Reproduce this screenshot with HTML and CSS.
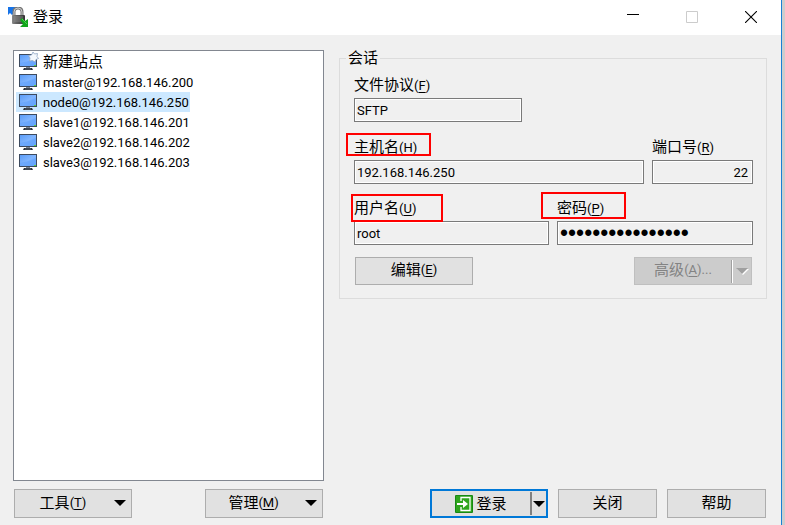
FILE: index.html
```html
<!DOCTYPE html>
<html lang="zh-CN">
<head>
<meta charset="utf-8">
<title>登录</title>
<link rel="stylesheet" href="styles.css">
</head>
<body>
<svg class="defs" aria-hidden="true">
  <defs>
    <linearGradient id="screen" x1="0" y1="0" x2="1" y2="1">
      <stop offset="0" stop-color="#5a9cf8"/><stop offset=".5" stop-color="#80b5ff"/><stop offset="1" stop-color="#6aa8ff"/>
    </linearGradient>
    <linearGradient id="metal" x1="0" y1="0" x2="1" y2="0">
      <stop offset="0" stop-color="#8a8a8a"/><stop offset=".3" stop-color="#666"/><stop offset="1" stop-color="#333"/>
    </linearGradient>
    <symbol id="monitor" viewBox="0 0 18 18">
      <path d="M0 1h18v13H0z" fill="#3d4a5e"/>
      <path d="M1 2h16v11H1z" fill="url(#screen)"/>
      <path d="M1 10Q9 9 17 5v8H1z" fill="#5c9dfb" opacity=".5"/>
      <path d="M15 12h2v1h-2z" fill="#5bd43c"/>
      <path d="M7 14h4v1H7z" fill="#7c8492"/>
      <path d="M5 15h8l1 2H4z" fill="#29313d"/>
      <path d="M6 16h6" stroke="#7c8492" stroke-width=".6"/>
    </symbol>
  </defs>
</svg>
<div class="window">
  <header class="titlebar">
    <svg class="app-icon" viewBox="0 0 20 20" aria-hidden="true">
      <path d="M0 0h8L5 3l2 2-3 3-2-2-2 2z" fill="#1673e8"/>
      <path d="M6 9V5q0-4 4-4t4 4v4" fill="none" stroke="#777" stroke-width="3"/>
      <path d="M6 9V5q0-4 4-4t4 4v4" fill="none" stroke="#ccc"/>
      <rect x="4" y="8" width="13" height="9" rx="1" fill="url(#metal)"/>
      <path d="M6 10h9M6 12h9M6 14h9" stroke="#aaa" stroke-width="1" opacity=".5"/>
      <path d="M12 13l2-2 3 3 3-2v8h-8l3-3z" fill="#12a51b"/>
      <path d="M14 12l5 5" stroke="#45d447"/>
    </svg>
    <h1 class="title">登录</h1>
    <div class="controls">
      <button class="control" type="button" aria-label="最小化"><svg viewBox="0 0 12 12"><path d="M0 3.500h12" stroke="#000"/></svg></button>
      <button class="control" type="button" aria-label="最大化" disabled><svg viewBox="0 0 12 12"><path d="M.5.5h11v11H.5z" fill="none" stroke="#ccc"/></svg></button>
      <button class="control" type="button" aria-label="关闭窗口"><svg viewBox="0 0 12 12"><path d="M0 0l12 12M12 0L0 12" stroke="#000" stroke-width="1.1"/></svg></button>
    </div>
  </header>
  <main class="content">
    <ul class="sites">
      <li class="site new"><svg class="site-icon" viewBox="0 0 18 18"><use href="#monitor"/><path d="M14 -1l1.500 2 3-.5-.5 3 1.500 2-2.500 1-1 2.500-2.500-1.500-3 .5 .5-3-1.500-2.500 3-.5z" fill="#f4f8fd" stroke="#8fa6c4" stroke-width=".8"/></svg><span class="site-name">新建站点</span></li>
      <li class="site"><svg class="site-icon"><use href="#monitor"/></svg><span class="site-name">master@192.168.146.200</span></li>
      <li class="site selected"><svg class="site-icon"><use href="#monitor"/></svg><span class="site-name">node0@192.168.146.250</span></li>
      <li class="site"><svg class="site-icon"><use href="#monitor"/></svg><span class="site-name">slave1@192.168.146.201</span></li>
      <li class="site"><svg class="site-icon"><use href="#monitor"/></svg><span class="site-name">slave2@192.168.146.202</span></li>
      <li class="site"><svg class="site-icon"><use href="#monitor"/></svg><span class="site-name">slave3@192.168.146.203</span></li>
    </ul>
    <form class="session-form">
      <fieldset class="session">
        <legend class="legend">会话</legend>
        <div class="row protocol-row">
          <div class="field">
            <label class="label" for="protocol">文件协议<span class="key">(<u>F</u>)</span></label>
            <input class="input" id="protocol" value="SFTP" readonly>
          </div>
        </div>
        <div class="row host-row">
          <div class="field">
            <label class="label mark mark-host" for="host">主机名<span class="key">(<u>H</u>)</span></label>
            <input class="input" id="host" value="192.168.146.250" readonly>
          </div>
          <div class="field">
            <label class="label" for="port">端口号<span class="key">(<u>R</u>)</span></label>
            <input class="input number" id="port" value="22" readonly>
          </div>
        </div>
        <div class="row user-row">
          <div class="field">
            <label class="label mark mark-user" for="user">用户名<span class="key">(<u>U</u>)</span></label>
            <input class="input" id="user" value="root" readonly>
          </div>
          <div class="field">
            <label class="label mark mark-password" for="password">密码<span class="key">(<u>P</u>)</span></label>
            <input class="input password" id="password" type="password" value="passwordpassword" readonly>
          </div>
        </div>
        <div class="actions">
          <button class="button wide" type="button"><span class="text">编辑<span class="key">(<u>E</u>)</span></span></button>
          <button class="button wide split" type="button" disabled><span class="text">高级<span class="key">(<u>A</u>)...</span></span><span class="divider"></span><svg class="arrow" viewBox="0 0 12 6"><path d="M1 1h12L7 7z" fill="#fff"/><path d="M0 0h12L6 6z" fill="#a0a0a0"/></svg></button>
        </div>
      </fieldset>
    </form>
  </main>
  <footer class="footer">
    <div class="footer-group tools">
      <button class="button wide menu" type="button"><span class="text">工具<span class="key">(<u>T</u>)</span></span><svg class="arrow" viewBox="0 0 12 6"><path d="M0 0h12L6 6z"/></svg></button>
      <button class="button wide menu" type="button"><span class="text">管理<span class="key">(<u>M</u>)</span></span><svg class="arrow" viewBox="0 0 12 6"><path d="M0 0h12L6 6z"/></svg></button>
    </div>
    <div class="footer-group">
      <button class="button wide split primary" type="button"><span class="text"><svg class="login-icon" viewBox="0 0 18 18"><rect width="18" height="18" rx="1" fill="#178915"/><rect x="1" y="1" width="16" height="16" fill="#2fa51d"/><path d="M6 6V2.500h9v13H6V12" fill="none" stroke="#fff" stroke-width="1.300"/><path d="M2 8h6V5l5 4-5 4v-3H2z" fill="#fff"/></svg>登录</span><span class="divider"></span><svg class="arrow" viewBox="0 0 12 6"><path d="M0 0h12L6 6z"/></svg></button>
      <button class="button" type="button"><span class="text">关闭</span></button>
      <button class="button" type="button"><span class="text">帮助</span></button>
    </div>
  </footer>
</div>
</body>
</html>
```
FILE: styles.css
```css
*,
*::after {
  box-sizing: border-box;
}

body {
  margin: 0;
  min-height: 100vh;
  display: flex;
  padding-right: 3px;
  background: #cdcdcd;
  color: #000;
  font: 15px/20px Roboto, "Noto Sans CJK SC", sans-serif;
}

button,
input {
  font: inherit;
  color: inherit;
  border-radius: 0;
  margin: 0;
}

.defs {
  position: absolute;
  width: 0;
  height: 0;
}

.window {
  flex: 1;
  display: flex;
  flex-direction: column;
  background: #f0f0f0;
  border-right: 1px solid #1a7fd4;
}

.titlebar {
  display: flex;
  align-items: center;
  height: 35px;
  padding: 0 1px 2px 8px;
  gap: 5px;
  background: #fff;
}

.app-icon {
  width: 20px;
  height: 20px;
}

.title {
  margin: 0;
  font-size: 15px;
  font-weight: 400;
}

.controls {
  display: flex;
  margin-left: auto;
}

.control {
  width: 59px;
  height: 32px;
  padding: 0;
  border: 0;
  background: none;
  display: flex;
  align-items: center;
  justify-content: center;
}

.control svg {
  width: 12px;
  height: 12px;
}

.content {
  flex: 1;
  display: grid;
  grid-template-columns: 311fr 428fr;
  gap: 15px;
  padding: 15px 14px 8px 13px;
}

.sites {
  margin: 0;
  padding: 1px 2px;
  list-style: none;
  background: #fff;
  border: 1px solid #828790;
}

.site {
  display: flex;
  align-items: center;
  gap: 3px;
  height: 20px;
  width: fit-content;
  padding-left: 3px;
  font-size: 13px;
}

.site-name {
  padding: 2px 1px 0 3px;
}

.new {
  font-size: 15px;
}

.new .site-name {
  padding-top: 0;
}

.selected {
  background: #cce8ff;
}

.site-icon {
  width: 18px;
  height: 18px;
  overflow: visible;
}

.session {
  margin: 0;
  padding: 7px 13px 13px 14px;
  border: 1px solid #dcdcdc;
  min-width: 0;
}

.legend {
  margin-left: -8px;
  padding: 0 2px;
  line-height: 16px;
}

.row {
  display: grid;
  gap: 8px;
  margin-bottom: 12px;
}

.protocol-row {
  grid-template-columns: 168fr 223fr;
  margin-bottom: 13px;
}

.host-row {
  grid-template-columns: 290fr 101fr;
}

.user-row {
  grid-template-columns: 195fr 196fr;
}

.field {
  min-width: 0;
}

.label {
  position: relative;
  display: block;
  width: fit-content;
  height: 25px;
  line-height: 24px;
}

.key {
  font-size: 13px;
}

u {
  text-underline-offset: 2px;
}

.mark::after {
  content: "";
  position: absolute;
  border: 2px solid #f00;
}

.mark-host::after {
  inset: -2px auto auto -8px;
  width: 85px;
  height: 23px;
}

.mark-user::after {
  inset: -2px auto auto -3px;
  width: 92px;
  height: 28px;
}

.mark-password::after {
  inset: -4px auto auto -16px;
  width: 85px;
  height: 27px;
}

.input {
  display: block;
  width: 100%;
  height: 24px;
  padding: 0 2px;
  border: 1px solid #7a7a7a;
  background: #f0f0f0;
  box-shadow: inset 0 0 0 1px #fff;
  font-size: 13px;
  outline: 0;
}

.number {
  text-align: right;
  padding-right: 4px;
}

.password {
  font-family: "Liberation Sans", sans-serif;
  font-size: 23px;
}

.actions {
  display: flex;
  justify-content: space-between;
  padding: 0 1px;
}

.button {
  display: flex;
  align-items: center;
  width: 99px;
  height: 29px;
  padding: 0;
  border: 1px solid #adadad;
  background: #e1e1e1;
}

.wide {
  width: 118px;
}

.actions .button {
  height: 28px;
}

.text {
  flex: 1;
  display: flex;
  align-items: center;
  justify-content: center;
  white-space: pre;
  padding-bottom: 2px;
}

.arrow {
  width: 12px;
  height: 6px;
  overflow: visible;
}

.menu .arrow {
  margin: 0 5px 2px 3px;
}

.split .arrow {
  margin: 0 3px;
}

.divider {
  width: 2px;
  height: 23px;
  background: #808080;
}

.button:disabled {
  background: #ccc;
  border-color: #bfbfbf;
  color: #838383;
}

.button:disabled .divider {
  background: linear-gradient(90deg, #a0a0a0 50%, #fff 50%);
}

.primary {
  border: 2px solid #0078d7;
}

.primary .arrow {
  margin: 0 1px;
}

.primary .text {
  padding-bottom: 0;
}

.login-icon {
  width: 18px;
  height: 18px;
  margin-right: 3px;
}

.footer {
  display: grid;
  grid-template-columns: 311fr 428fr;
  gap: 15px;
  padding: 0 15px 7px 13px;
}

.footer-group {
  display: flex;
  justify-content: flex-end;
  gap: 10px;
}

.tools {
  justify-content: space-between;
  padding: 0 1px;
}
```
